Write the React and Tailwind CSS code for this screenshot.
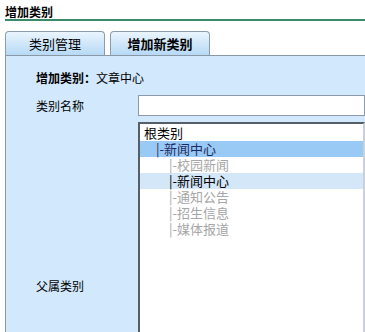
const font = { fontFamily: '"Noto Sans CJK SC", "Liberation Sans", sans-serif' };

const items = [
  { text: "根类别", indent: "pl-[4px]", cls: "text-black" },
  { text: "|-新闻中心", indent: "pl-[16px]", cls: "text-[#1c2a60] bg-[#99c9f5]" },
  { text: "|-校园新闻", indent: "pl-[29px]", cls: "text-[#a6a6a6]" },
  { text: "|-新闻中心", indent: "pl-[29px]", cls: "text-black bg-[#d3e7f9]" },
  { text: "|-通知公告", indent: "pl-[29px]", cls: "text-[#a6a6a6]" },
  { text: "|-招生信息", indent: "pl-[29px]", cls: "text-[#a6a6a6]" },
  { text: "|-媒体报道", indent: "pl-[29px]", cls: "text-[#a6a6a6]" },
];

function Tab({ label, active }) {
  return (
    <div
      className={
        "w-[100px] h-[24px] flex items-center justify-center rounded-t-[4px] border border-b-0 border-[#8c9cac] bg-gradient-to-b from-[#eaf5fe] to-[#b6d9f5] text-[13px] leading-none text-black " +
        (active ? "font-bold" : "")
      }
    >
      {label}
    </div>
  );
}

export default function App() {
  return (
    <div className="w-[365px] h-[332px] overflow-hidden bg-white pl-[5px]" style={font}>
      {/* title */}
      <div className="pt-[5px] h-[19px] text-[12px] leading-[13px] font-bold text-black">增加类别</div>
      <div className="h-[2px] bg-[#3a8a6c]" />

      {/* tabs */}
      <div className="flex gap-[5px] mt-[10px]">
        <Tab label="类别管理" />
        <Tab label="增加新类别" active />
      </div>

      {/* panel */}
      <div className="border-t border-l border-[#8a98a6] bg-[#d2e8fc]">
        <div className="h-[38px] flex items-center pl-[30px] pt-[6px] text-[12px] leading-none text-black">
          <span className="font-bold">增加类别：</span>
          <span>文章中心</span>
        </div>
        <div className="flex items-center h-[21px] mt-[1px]">
          <div className="w-[132px] pl-[30px] text-[12px] leading-none text-black">类别名称</div>
          <div className="flex-1 h-[21px] bg-white border border-[#8a9aaa]" />
        </div>
        <div className="flex items-center mt-[6px]">
          <div className="w-[132px] pl-[30px] text-[12px] leading-none text-black">父属类别</div>
          <div className="flex-1 h-[327px] bg-white border-[2px] border-t-[#555f6a] border-l-[#555f6a] border-r-[#c8d0d8] border-b-[#c8d0d8] pt-[1px]">
            {items.map((it, i) => (
              <div
                key={i}
                className={"h-[16px] text-[13px] leading-[16px] whitespace-nowrap " + it.indent + " " + it.cls}
              >
                {it.text}
              </div>
            ))}
          </div>
        </div>
      </div>
    </div>
  );
}
